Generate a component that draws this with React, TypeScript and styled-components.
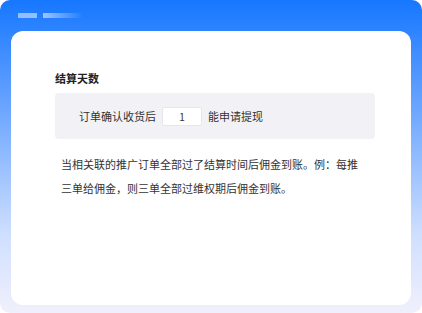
import { createGlobalStyle } from "styled-components";
import styled from "styled-components";

const Global = createGlobalStyle`
  html, body {
    margin: 0;
    padding: 0;
    background: #ffffff;
  }
  body {
    font-family: "Noto Sans CJK SC", "Noto Sans", sans-serif;
  }
`;

const Frame = styled.div`
  width: 422px;
  height: 313px;
  box-sizing: border-box;
  border-radius: 10px;
  background: linear-gradient(180deg, #1677ff 0%, #5b9cff 28%, #cfdfff 75%, #f0f0fc 100%);
  display: flex;
  flex-direction: column;
  padding: 0 11px 8px;
`;

const TopBar = styled.div`
  height: 31px;
  display: flex;
  align-items: flex-start;
  gap: 6px;
  padding: 13px 0 0 7px;
  box-sizing: border-box;
`;

const Dash = styled.span<{ $w: number; $fade?: boolean }>`
  display: block;
  width: ${(p) => p.$w}px;
  height: 5px;
  background: ${(p) =>
    p.$fade
      ? "linear-gradient(90deg, rgba(255,255,255,0.55), rgba(255,255,255,0))"
      : "rgba(255,255,255,0.5)"};
`;

const Card = styled.div`
  flex: 1;
  background: #ffffff;
  border-radius: 12px;
  padding: 39px 36px 0 44px;
`;

const Title = styled.div`
  font-size: 11px;
  line-height: 16px;
  font-weight: 700;
  color: #222222;
`;

const Setting = styled.div`
  margin-top: 7px;
  height: 46px;
  background: #f2f2f6;
  border-radius: 4px;
  display: flex;
  align-items: center;
  gap: 6px;
  padding-left: 24px;
  font-size: 11px;
  color: #333333;
`;

const DayInput = styled.div`
  width: 40px;
  height: 19px;
  box-sizing: border-box;
  background: #ffffff;
  border: 1px solid #e6e6ea;
  border-radius: 2px;
  display: flex;
  align-items: center;
  justify-content: center;
  font-size: 10px;
  color: #333333;
`;

const Desc = styled.p`
  margin: 13px 0 0;
  padding-left: 6px;
  width: 300px;
  font-size: 11px;
  line-height: 24px;
  color: #333333;
`;

export default function App() {
  return (
    <>
      <Global />
      <Frame>
        <TopBar>
          <Dash $w={19} />
          <Dash $w={40} $fade />
        </TopBar>
        <Card>
          <Title>结算天数</Title>
          <Setting>
            <span>订单确认收货后</span>
            <DayInput>1</DayInput>
            <span>能申请提现</span>
          </Setting>
          <Desc>
            当相关联的推广订单全部过了结算时间后佣金到账。例：每推三单给佣金，则三单全部过维权期后佣金到账。
          </Desc>
        </Card>
      </Frame>
    </>
  );
}
